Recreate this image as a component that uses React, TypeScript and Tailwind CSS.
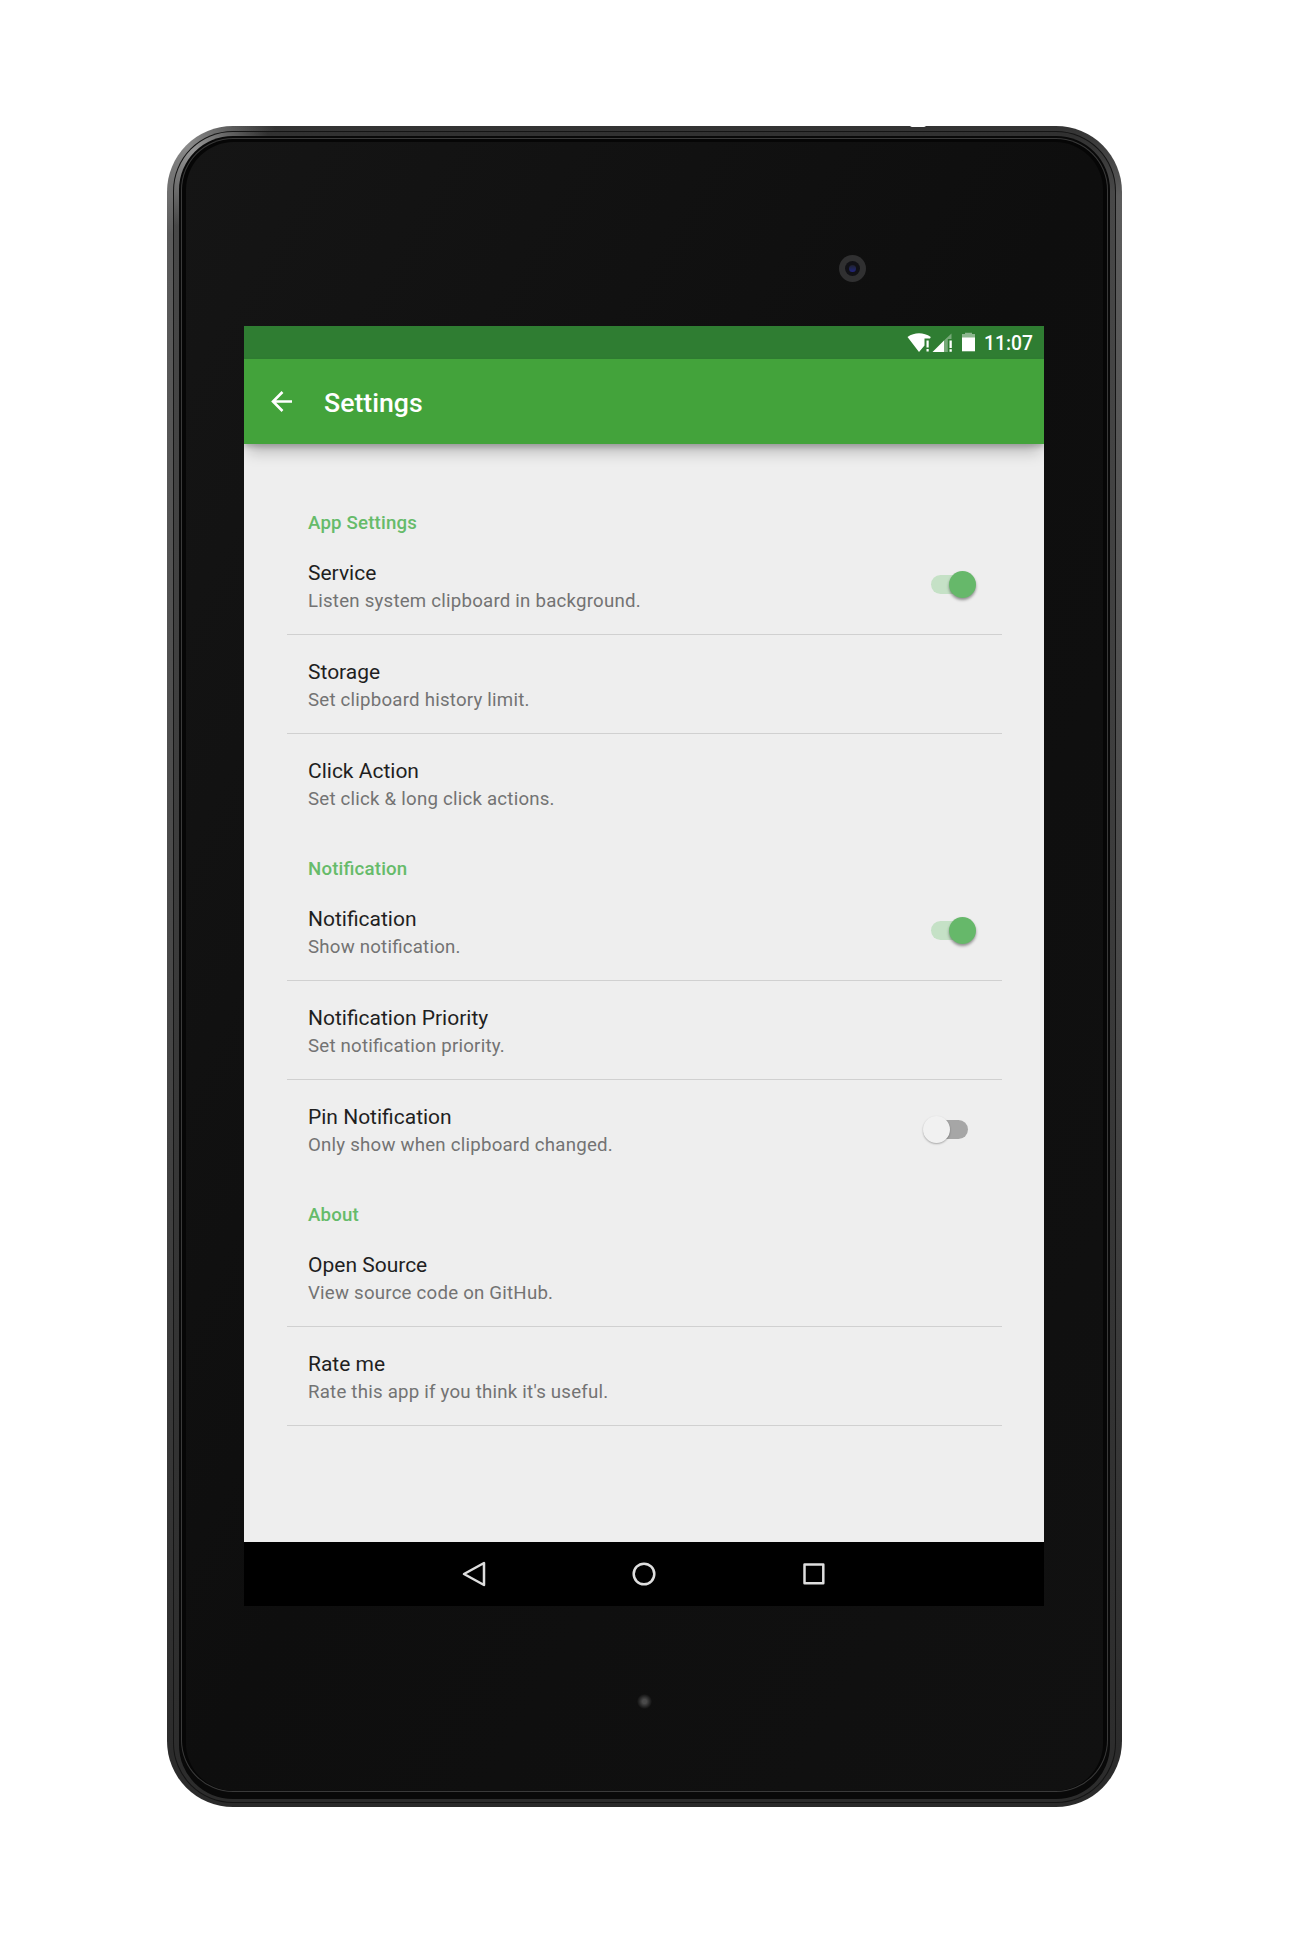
import type { ReactNode } from "react";

type Item = { title: string; summary: string; toggle?: boolean; divider: boolean };
type Group = { heading: string; items: Item[] };

const groups: Group[] = [
  {
    heading: "App Settings",
    items: [
      { title: "Service", summary: "Listen system clipboard in background.", toggle: true, divider: true },
      { title: "Storage", summary: "Set clipboard history limit.", divider: true },
      { title: "Click Action", summary: "Set click & long click actions.", divider: false },
    ],
  },
  {
    heading: "Notification",
    items: [
      { title: "Notification", summary: "Show notification.", toggle: true, divider: true },
      { title: "Notification Priority", summary: "Set notification priority.", divider: true },
      { title: "Pin Notification", summary: "Only show when clipboard changed.", toggle: false, divider: false },
    ],
  },
  {
    heading: "About",
    items: [
      { title: "Open Source", summary: "View source code on GitHub.", divider: true },
      { title: "Rate me", summary: "Rate this app if you think it's useful.", divider: true },
    ],
  },
];

function Switch({ on }: { on: boolean }) {
  return on ? (
    <span className="relative mr-[26px] mb-[2px] block h-[27px] w-[45px]">
      <span className="absolute top-[4px] left-0 h-[19px] w-[38px] rounded-full bg-[#c5e1c6]" />
      <span className="absolute top-0 right-0 size-[27px] rounded-full bg-[#66b86a] shadow-[0_2px_3px_rgba(0,0,0,0.4)]" />
    </span>
  ) : (
    <span className="relative mr-[34px] block h-[27px] w-[45px]">
      <span className="absolute top-[4px] right-0 h-[19px] w-[38px] rounded-full bg-[#a6a6a6]" />
      <span className="absolute top-0 left-0 size-[27px] rounded-full bg-[#f1f1f1] shadow-[0_1px_2px_rgba(0,0,0,0.3)]" />
    </span>
  );
}

function Row({ item }: { item: Item }) {
  return (
    <div className={`flex h-[99px] items-center justify-between border-b pl-[21px] ${item.divider ? "border-[#d0d0d0]" : "border-transparent"}`}>
      <div className="pt-[3px]">
        <div className="text-[21px] leading-[28px] text-[#1f1f1f]">{item.title}</div>
        <div className="mt-px text-[18.67px] leading-[27px] tracking-[0.22px] text-[#737373] [font-feature-settings:'liga']">{item.summary}</div>
      </div>
      {item.toggle !== undefined && <Switch on={item.toggle} />}
    </div>
  );
}

function StatusBar() {
  return (
    <div className="flex h-[33px] shrink-0 items-center justify-end bg-[#2f7d32] pr-[11px] text-white">
      <svg className="h-[33px] w-[80px]" viewBox="0 0 80 33" fill="#fff">
        <path d="M4.500 11C11.500 6 20.500 6 27.800 11L27 12.500H21.500V19.500L16 26Z" />
        <path d="M23.500 14.500h2.200v7h-2.200zM23.500 23h2.200v2.500h-2.200z" />
        <path d="M29.500 26 41 14.500v11.500z" />
        <path d="M41 14.500 48.500 7.500v5.500H44.800v13H41z" opacity=".35" />
        <path d="M46.500 14.500h2.300v7.500h-2.300zM46.500 23.200h2.300v2.600h-2.300z" />
        <path d="M59 8h3V6.800h7v1.200h3v4H59z" opacity=".45" />
        <path d="M59 11.500h13v13.800H59z" />
      </svg>
      <span className="ml-px pt-[2px] text-[19.3px] leading-[31px] font-medium">11:07</span>
    </div>
  );
}

function AppBar() {
  return (
    <div className="relative z-10 flex h-[85px] shrink-0 items-center bg-[#43a33b] pl-[27px] text-white shadow-[0_3px_5px_rgba(0,0,0,0.2),0_12px_14px_-4px_rgba(0,0,0,0.22)]">
      <svg className="size-[22px]" viewBox="0 0 22 22" fill="none" stroke="#fff" strokeWidth="2.600">
        <path d="M21 10.500H2.500M11.500 1 2 10.500l9.500 9.500" />
      </svg>
      <h1 className="ml-[31px] pt-[2px] text-[26.67px] leading-[32px] font-medium">Settings</h1>
    </div>
  );
}

function NavSlot({ children }: { children: ReactNode }) {
  return (
    <svg className="h-[26px] w-[26px]" viewBox="0 0 26 26" fill="none" stroke="#dedede" strokeWidth="2.500" strokeLinejoin="round">
      {children}
    </svg>
  );
}

export default function App() {
  return (
    <div className="flex h-[1934px] w-[1289px] justify-center bg-white pt-[126px] font-['Roboto',sans-serif]">
      <div className="relative h-[1681px] w-[955px] rounded-[66px] bg-[radial-gradient(circle_at_20px_20px,#8a8a8a,transparent_90px),linear-gradient(to_bottom,#323232,#5c5c5c_70px,#484848_50%,#2a2a2a)] px-[6px] pt-[5px] pb-[4px]">
        <div className="h-full rounded-[60px] bg-[#141414] p-[1px]">
          <div className="h-full rounded-[59px] bg-[radial-gradient(circle_at_15px_15px,#9a9a9a,transparent_80px),linear-gradient(to_bottom,#303030,#484848_60px,#2c2c2c)] px-[5px] pt-[4px] pb-[3px]">
            <div className="h-full rounded-[54px] bg-[#090909] px-[2px] pt-[2px] pb-[7px]">
              <div className="h-full rounded-[52px] bg-[#3a3a3a] p-[1px]">
                <div className="h-full rounded-[51px] bg-[#060606] px-[4px] pt-[3px] pb-0">
                  <div className="flex h-full flex-col items-center rounded-[48px] bg-linear-to-br from-[#151515] via-[#0e0e0e] to-[#111111] pt-[184px]">
                    <div className="mr-px flex h-[1280px] w-[800px] shrink-0 flex-col overflow-hidden bg-[#eeeeee]">
                      <StatusBar />
                      <AppBar />
                      <main className="flex-1 pt-[43px] pr-[42px] pl-[43px]">
                        {groups.map((g) => (
                          <section key={g.heading}>
                            <h2 className="h-[49px] pt-[23px] pl-[21px] text-[18.67px] leading-[27px] font-medium tracking-[0.18px] text-[#66bb6a] [font-feature-settings:'liga']">{g.heading}</h2>
                            {g.items.map((i) => (
                              <Row key={i.title} item={i} />
                            ))}
                          </section>
                        ))}
                      </main>
                      <nav className="flex h-[64px] shrink-0 items-center justify-center gap-[144px] bg-black">
                        <NavSlot><path d="M23 2v22L3 13z" /></NavSlot>
                        <NavSlot><circle cx="13" cy="13" r="10.300" /></NavSlot>
                        <NavSlot><rect x="3.500" y="3.500" width="18.800" height="18.800" /></NavSlot>
                      </nav>
                    </div>
                  </div>
                </div>
              </div>
            </div>
          </div>
        </div>
        <div className="absolute -top-[1px] left-[743px] h-[2px] w-[16px] rounded-b-full bg-white" />
        <div className="absolute top-[129px] left-[672px] flex size-[27px] items-center justify-center rounded-full bg-[#303031]">
          <div className="flex size-[15px] items-center justify-center rounded-full bg-[#111116]">
            <div className="size-[7px] rounded-full bg-linear-to-b from-[#20202c] to-[#222280]" />
          </div>
        </div>
        <div className="absolute top-[1568px] left-[470px] size-[15px] rounded-full bg-radial from-[#4a4a4a] from-20% to-[#111111] to-70%" />
      </div>
    </div>
  );
}
